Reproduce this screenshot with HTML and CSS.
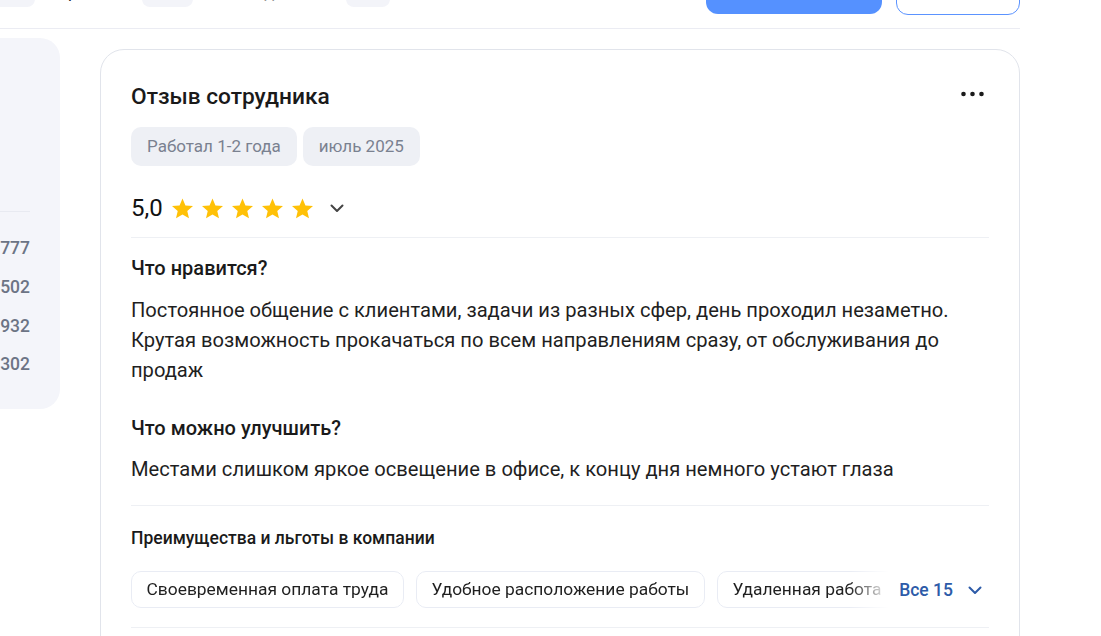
FILE: index.html
```html
<!DOCTYPE html>
<html lang="ru">
<head>
<meta charset="utf-8">
<title>Отзыв сотрудника</title>
<link rel="stylesheet" href="styles.css">
</head>
<body>
<div class="page">
  <header class="topbar">
    <nav class="tabs">
      <span class="tab">Отзывы</span><span class="count">1 777</span>
      <span class="tab">Зарплаты</span><span class="count">502</span>
      <span class="tab">Собеседования</span><span class="count">32</span>
    </nav>
    <div class="actions">
      <button class="btn btn-primary">Написать отзыв</button>
      <button class="btn btn-outline">Войти</button>
    </div>
  </header>

  <div class="layout">
    <aside class="sidebar">
      <div class="summary">
        <h3 class="summary-title">Рейтинг компании</h3>
        <div class="summary-value">4,6</div>
        <div class="summary-caption">на основе всех отзывов</div>
      </div>
      <ul class="stats">
        <li class="stat"><span class="stat-label">Отзывы</span><span class="stat-value">1 777</span></li>
        <li class="stat"><span class="stat-label">Зарплаты</span><span class="stat-value">1 502</span></li>
        <li class="stat"><span class="stat-label">Собеседования</span><span class="stat-value">2 932</span></li>
        <li class="stat"><span class="stat-label">Вакансии</span><span class="stat-value">1 302</span></li>
      </ul>
    </aside>

    <main class="review">
      <div class="review-head">
        <h2 class="review-title">Отзыв сотрудника</h2>
        <button class="more" aria-label="Ещё">
          <svg width="24" height="22" viewBox="0 0 24 22"><circle cx="2.5" cy="11" r="2.3"/><circle cx="11.5" cy="11" r="2.3"/><circle cx="20.5" cy="11" r="2.3"/></svg>
        </button>
      </div>
      <div class="tags">
        <span class="tag">Работал 1-2 года</span>
        <span class="tag">июль 2025</span>
      </div>
      <div class="rating">
        <span class="rating-value">5,0</span>
        <div class="stars">
          <svg class="star" viewBox="2 1.6 20 20"><path d="M12 17.27L18.18 21l-1.64-7.03L22 9.24l-7.19-.61L12 2 9.19 8.63 2 9.24l5.46 4.73L5.820 21z"/></svg>
          <svg class="star" viewBox="2 1.6 20 20"><path d="M12 17.27L18.18 21l-1.64-7.03L22 9.24l-7.19-.61L12 2 9.19 8.63 2 9.24l5.46 4.73L5.82 21z"/></svg>
          <svg class="star" viewBox="2 1.6 20 20"><path d="M12 17.27L18.18 21l-1.64-7.03L22 9.24l-7.19-.61L12 2 9.19 8.63 2 9.24l5.46 4.73L5.82 21z"/></svg>
          <svg class="star" viewBox="2 1.6 20 20"><path d="M12 17.27L18.18 21l-1.64-7.03L22 9.24l-7.19-.61L12 2 9.19 8.63 2 9.24l5.46 4.73L5.82 21z"/></svg>
          <svg class="star" viewBox="2 1.6 20 20"><path d="M12 17.27L18.18 21l-1.64-7.03L22 9.24l-7.19-.61L12 2 9.19 8.63 2 9.24l5.46 4.73L5.82 21z"/></svg>
        </div>
        <svg class="chevron" viewBox="0 0 24 24"><path d="M6.5 9.5l5.5 5.5 5.5-5.5"/></svg>
      </div>

      <section class="section">
        <h3 class="section-title">Что нравится?</h3>
        <p class="section-text section-text-first">Постоянное общение с клиентами, задачи из разных сфер, день проходил незаметно. Крутая возможность прокачаться по всем направлениям сразу, от обслуживания до продаж</p>
        <h3 class="section-title section-title-next">Что можно улучшить?</h3>
        <p class="section-text">Местами слишком яркое освещение в офисе, к концу дня немного устают глаза</p>
      </section>

      <section class="perks">
        <h4 class="perks-title">Преимущества и льготы в компании</h4>
        <div class="perks-row">
          <div class="chips">
            <span class="chip">Своевременная оплата труда</span>
            <span class="chip">Удобное расположение работы</span>
            <span class="chip">Удаленная работа</span>
            <span class="chip">Гибкий график</span>
          </div>
          <button class="all">Все 15
            <svg class="chevron chevron-blue" viewBox="0 0 24 24"><path d="M6.5 9.5l5.5 5.5 5.5-5.5"/></svg>
          </button>
        </div>
      </section>
    </main>
  </div>
</div>
</body>
</html>
```

FILE: styles.css
```css
* { box-sizing: border-box; }

html, body {
  margin: 0;
  padding: 0;
  background: #ffffff;
  overflow: hidden;
}

body {
  font-family: Roboto, "Noto Sans", Arial, sans-serif;
  color: #1f1f1f;
}

.page {
  width: 1300px;
  margin-left: -280px;
}

/* top bar */
.topbar {
  height: 69px;
  margin-top: -40px;
  display: flex;
  align-items: center;
  justify-content: space-between;
  border-bottom: 1px solid #ebecf3;
}

.tabs {
  display: flex;
  align-items: center;
  gap: 14px;
  padding-left: 173px;
  font-size: 17px;
  color: #1f1f1f;
}

.tab { line-height: 20px; margin-top: -5px; }

.count {
  height: 26px;
  line-height: 26px;
  padding: 0 14px;
  border-radius: 8px;
  background: #f3f4f9;
  color: #7a8190;
  font-size: 14px;
}

.actions {
  display: flex;
  align-items: center;
  gap: 14px;
}

.btn {
  font-family: inherit;
  font-size: 16px;
  border-radius: 12px;
  padding: 0 0 10px;
  cursor: pointer;
}

.btn-primary {
  width: 176px;
  height: 40px;
  border: none;
  background: #5591ff;
  color: #fff;
}

.btn-outline {
  width: 124px;
  height: 42px;
  border: 1px solid #5b93ff;
  background: #fff;
  color: #3a76e8;
}

/* layout */
.layout {
  display: flex;
  align-items: flex-start;
  gap: 40px;
  padding-top: 9px;
}

/* sidebar */
.sidebar {
  width: 340px;
  flex: none;
  background: #f4f5fa;
  border-radius: 20px;
  padding: 24px 30px 25px 30px;
}

.summary {
  padding-bottom: 41px;
  border-bottom: 1px solid #e8eaf1;
}

.summary-title {
  margin: 0;
  font-size: 18px;
  line-height: 24px;
  font-weight: 500;
}

.summary-value {
  margin-top: 8px;
  font-size: 40px;
  line-height: 48px;
  font-weight: 500;
}

.summary-caption {
  margin-top: 8px;
  font-size: 14px;
  line-height: 20px;
  color: #7a8190;
}

.stats {
  list-style: none;
  margin: 17px 0 0;
  padding: 0;
}

.stat {
  display: flex;
  justify-content: space-between;
  align-items: center;
  height: 38.7px;
  font-size: 17.5px;
}

.stat-label { color: #1f1f1f; }

.stat-value {
  color: #6c7485;
  font-weight: 500;
}

/* review card */
.review {
  width: 920px;
  flex: none;
  margin-top: 11px;
  border: 1px solid #e1e4eb;
  border-radius: 24px;
  padding: 33px 30px 40px 30px;
  min-height: 700px;
}

.review-head {
  display: flex;
  justify-content: space-between;
  align-items: flex-start;
}

.review-title {
  margin: 0;
  font-size: 22.7px;
  line-height: 28px;
  font-weight: 500;
  color: #1a1a1a;
}

.more {
  border: none;
  background: none;
  padding: 0;
  margin-right: 4px;
  width: 24px;
  height: 22px;
  fill: #1a1a1a;
  cursor: pointer;
}

.more svg { display: block; }

.tags {
  display: flex;
  gap: 6px;
  margin-top: 16px;
}

.tag {
  height: 39px;
  line-height: 39px;
  padding: 0 16px;
  border-radius: 10px;
  background: #eef0f5;
  color: #7a8190;
  font-size: 17px;
}

.rating {
  display: flex;
  align-items: center;
  height: 24px;
  margin-top: 30px;
}

.rating-value {
  font-size: 24px;
  line-height: 24px;
  color: #111;
  margin-right: 9px;
  margin-left: 0;
}

.stars {
  display: flex;
  gap: 9px;
}

.star {
  width: 21px;
  height: 21px;
  fill: #ffc107;
}

.chevron {
  width: 24px;
  height: 24px;
  fill: none;
  stroke: #444;
  stroke-width: 2;
  stroke-linecap: round;
  stroke-linejoin: round;
  margin-left: 12px;
}

/* text sections */
.section {
  margin-top: 17px;
  border-top: 1px solid #eef0f4;
  padding-top: 18px;
  padding-bottom: 21px;
}

.section-title {
  margin: 0;
  font-size: 20px;
  line-height: 24px;
  font-weight: 500;
  color: #1a1a1a;
}

.section-title-next { margin-top: 31px; }

.section-text {
  margin: 14px 0 0;
  font-size: 20.15px;
  line-height: 30px;
  color: #1f1f1f;
}

.section-text-first { margin-top: 15px; }

/* perks */
.perks {
  border-top: 1px solid #eef0f4;
  border-bottom: 1px solid #eef0f4;
  padding-top: 22px;
  padding-bottom: 19px;
}

.perks-title {
  margin: 0;
  font-size: 17.5px;
  line-height: 20px;
  font-weight: 500;
  color: #1a1a1a;
}

.perks-row {
  display: flex;
  align-items: center;
  gap: 10px;
  margin-top: 23px;
}

.chips {
  flex: 1;
  display: flex;
  gap: 12px;
  overflow: hidden;
  -webkit-mask-image: linear-gradient(to right, #000 calc(100% - 40px), transparent 100%);
  mask-image: linear-gradient(to right, #000 calc(100% - 40px), transparent 100%);
}

.chip {
  flex: none;
  height: 37px;
  line-height: 35px;
  padding: 0 14.5px;
  border: 1px solid #e9ecf4;
  border-radius: 10px;
  font-size: 17.4px;
  color: #1f1f1f;
  white-space: nowrap;
}

.all {
  flex: none;
  display: flex;
  align-items: center;
  border: none;
  background: none;
  padding: 0;
  margin-right: 2px;
  font-family: inherit;
  font-size: 17.5px;
  font-weight: 500;
  color: #2d5ba8;
  cursor: pointer;
}

.chevron-blue {
  stroke: #2d5ba8;
  margin-left: 10px;
}
```
